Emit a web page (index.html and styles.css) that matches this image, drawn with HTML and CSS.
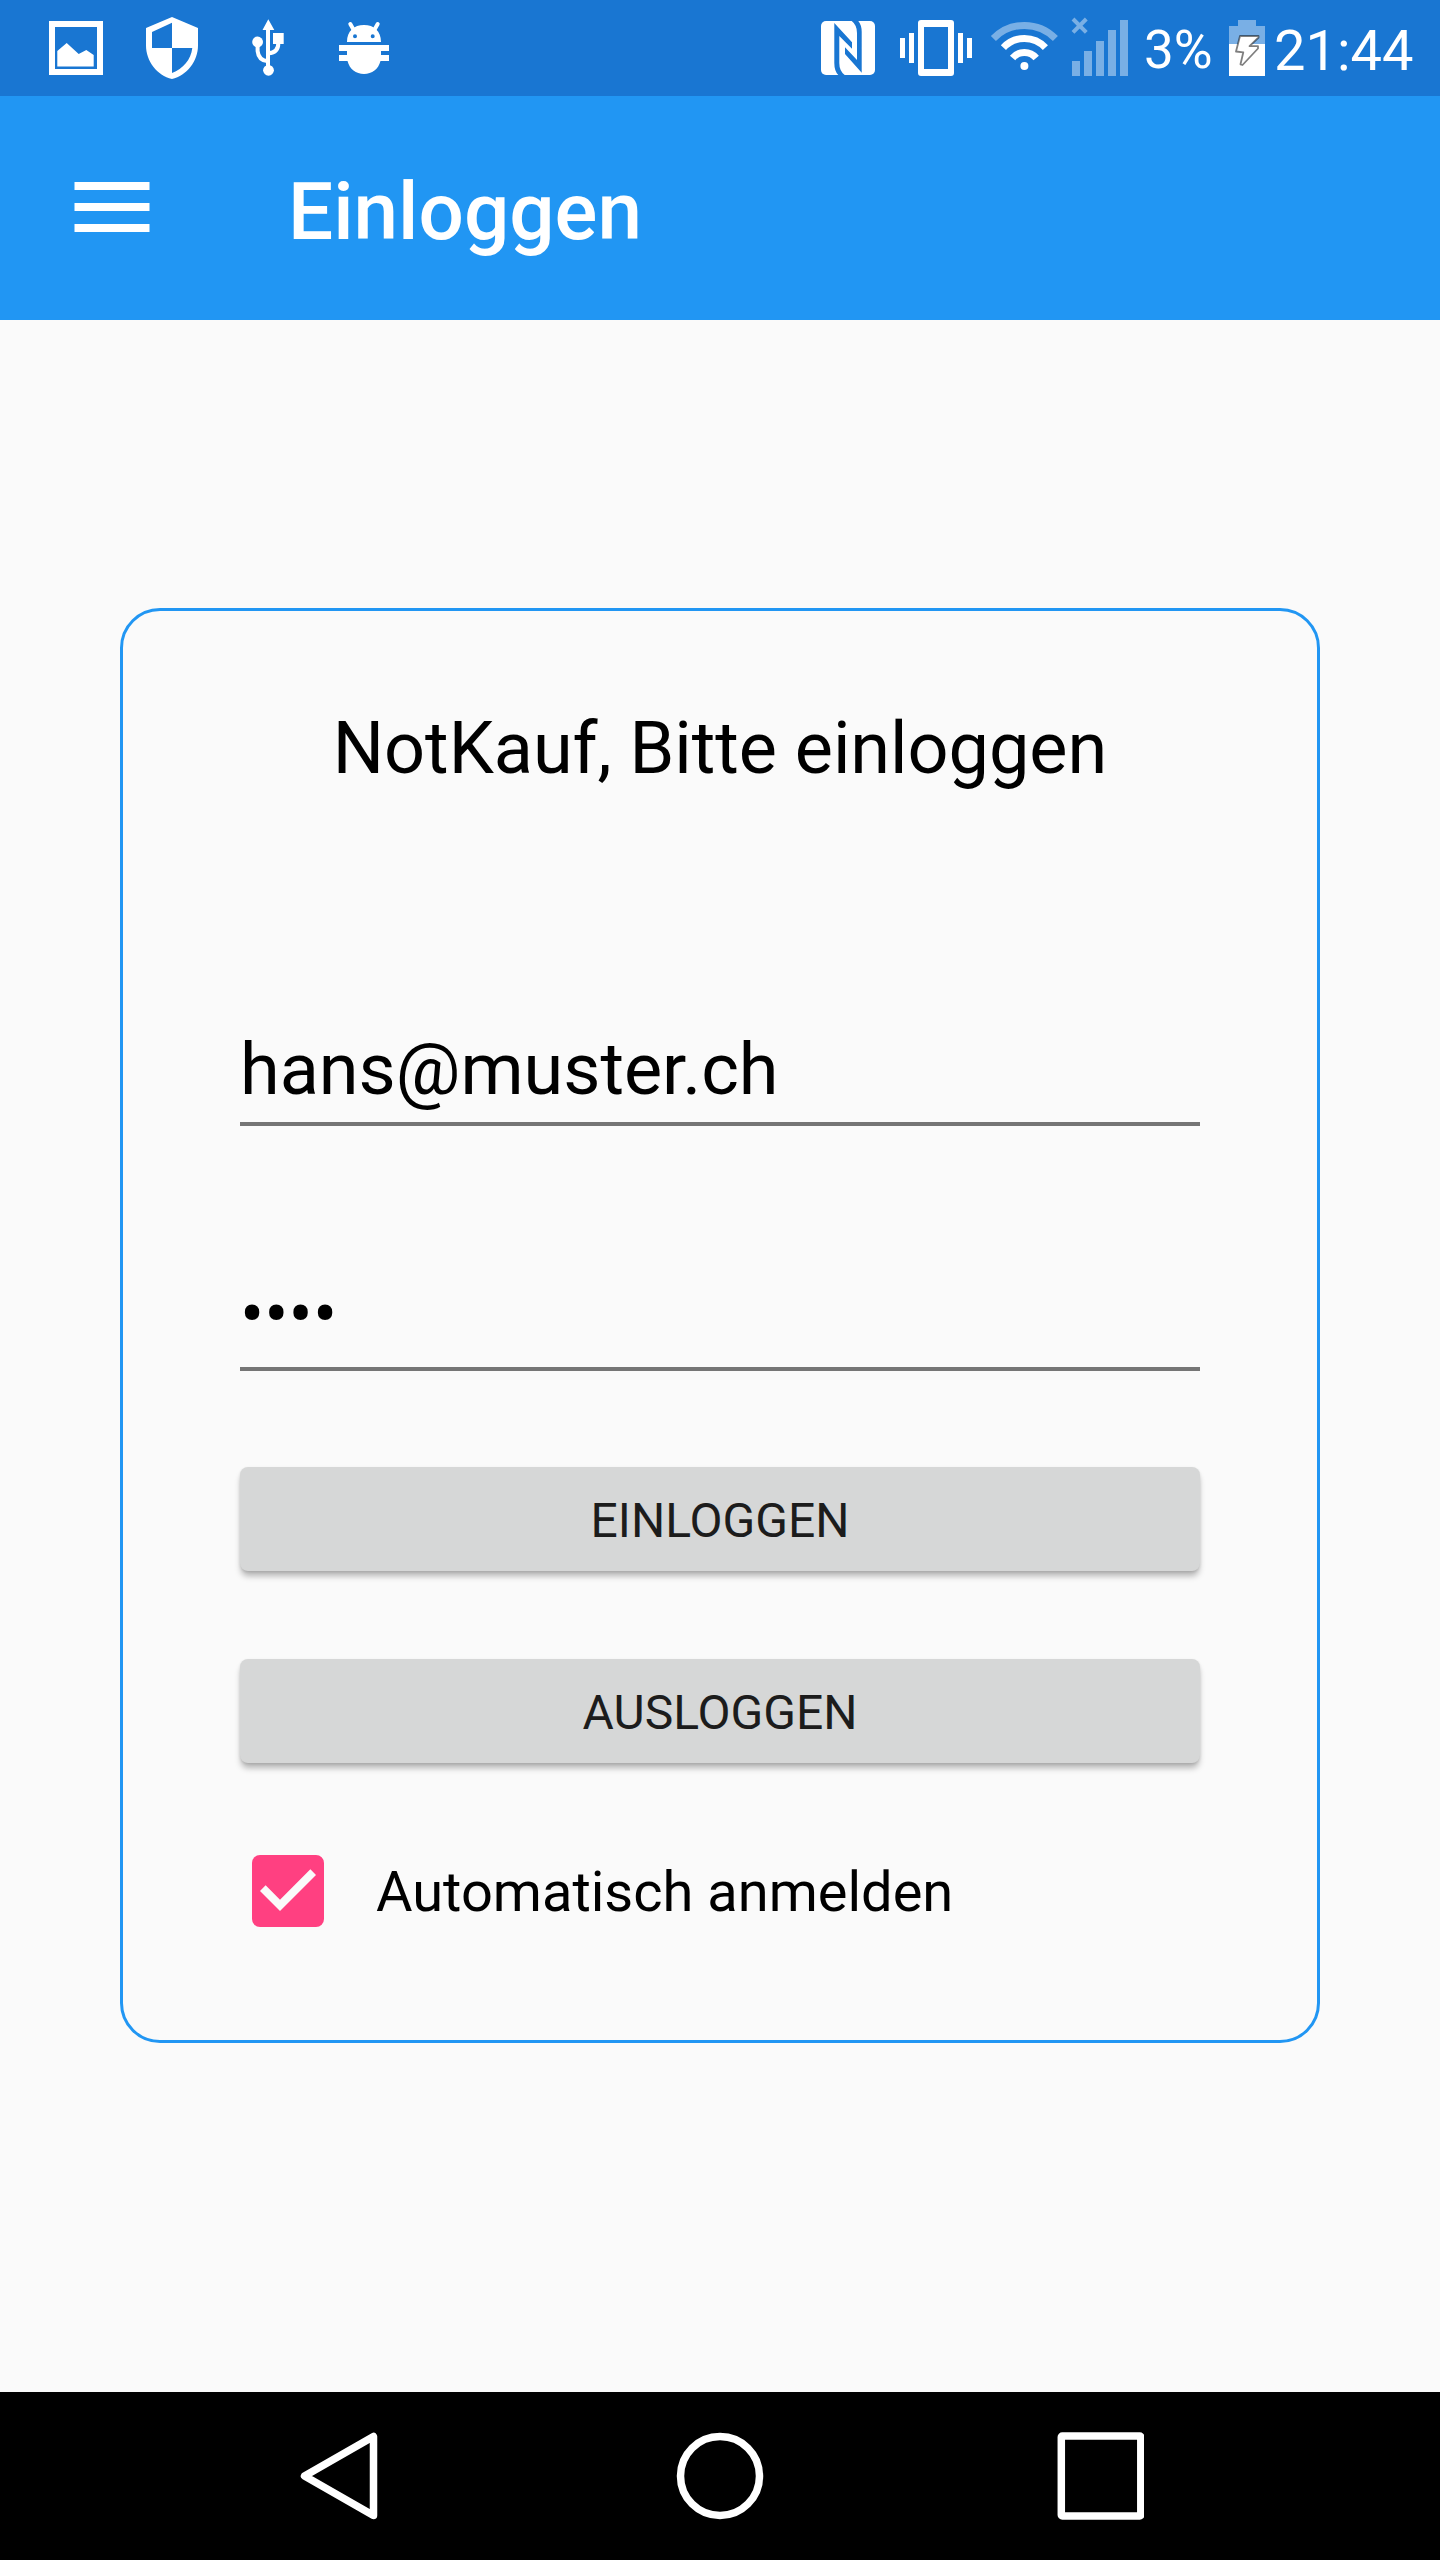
FILE: index.html
```html
<!DOCTYPE html>
<html lang="de">
<head>
<meta charset="utf-8">
<title>Einloggen</title>
<link rel="stylesheet" href="styles.css">
</head>
<body>
<div class="screen">
  <div class="status">
    <div class="notifications">
      <svg width="54" height="96" viewBox="49 0 54 96" fill="#fff"><path fill-rule="evenodd" d="M49 21H103V75H49ZM55 27V69H97V27Z"/><path d="M57.3 51L66.7 43L78.7 54L86.3 50L93.7 55V66.5H57.3Z"/></svg>
      <svg width="52" height="96" viewBox="146 0 52 96" fill="#fff"><path fill-rule="evenodd" d="M172 17L198 28V45.500C198 61 187 75.500 172 79C157 75.500 146 61 146 45.500V28ZM172 22.700L152 32V48H172ZM172 48V73C183 69 191 59.500 192.300 48Z"/></svg>
      <svg width="32" height="96" viewBox="252 0 32 96" fill="#fff"><path d="M268.300 19.300L274.300 30H270V70H266V30H262.500Z"/><circle cx="268.500" cy="70.300" r="5.400"/><circle cx="257.600" cy="42" r="5.400"/><path d="M273 33H283.700V44H273Z"/><path fill="none" stroke="#fff" stroke-width="4" d="M257.600 42V51Q258.500 60.500 268 61.300M278.300 43Q278.500 52.500 268.500 53.300"/></svg>
      <svg width="50" height="96" viewBox="339 0 50 96" fill="#fff"><path fill-rule="evenodd" d="M347 42C347 31 354 25 364 25S381 31 381 42ZM353 36.300a2 2 0 1 0 4 0a2 2 0 1 0-4 0ZM370.700 36.300a2 2 0 1 0 4 0a2 2 0 1 0-4 0Z"/><path d="M339 45H389V51H381V55H389V61H380.500C378.500 69 372 74 364 74S349.500 69 347.500 61H339V55H347V51H339Z"/><path stroke="#fff" stroke-width="4" stroke-linecap="round" d="M350.300 24L354 30.500M377.700 24L374 30.500"/></svg>
    </div>
    <div class="system">
      <svg width="307" height="96" viewBox="821 0 307 96" fill="#fff">
        <rect x="821" y="21" width="54" height="54" rx="5"/>
        <path fill="#1976d2" d="M834.300 23L852 42.300V48.700L839.300 36V63Q839.300 71 844.700 75H838.300Q834.300 71 834.300 63ZM861.700 72.700L845 54V47.300L857 60V33Q857 25 851.700 21H858.300Q861.700 25 861.700 32Z"/>
        <path fill-rule="evenodd" d="M921 20H951Q954 20 954 23V73Q954 76 951 76H921Q918 76 918 73V23Q918 20 921 20ZM924 27V69H948V27Z"/>
        <path d="M900 38h5v20h-5ZM909 33h5v30h-5ZM958 33h5v30h-5ZM967 38h5v20h-5Z"/>
        <circle cx="1024.400" cy="66" r="4"/>
        <g fill="none" stroke="#fff" stroke-width="7">
          <path d="M1012.600 58A15.400 15.400 0 0 1 1036.200 58"/>
          <path d="M1003.400 47.700A28.600 28.600 0 0 1 1045.400 47.700"/>
          <path stroke-opacity=".42" d="M993.400 38.500A43.200 43.200 0 0 1 1055.400 38.500"/>
          <path stroke-opacity=".42" stroke-width="4" d="M1073 19L1086.300 32.300M1086.300 19L1073 32.300"/>
        </g>
        <path fill-opacity=".42" d="M1072 61h8v15h-8ZM1084 51h8v25h-8ZM1096 41h8v35h-8ZM1108 30h8v46h-8ZM1120 20h8v56h-8Z"/>
      </svg>
      <span class="percent">3%</span>
      <svg width="36" height="96" viewBox="1229 0 36 96" fill="#fff"><path fill-opacity=".42" d="M1238 20H1256V26H1265V44H1229V26H1238Z"/><path d="M1229 44H1265V76H1229Z"/><path stroke="#000" stroke-opacity=".5" stroke-width="1.800" stroke-linejoin="round" d="M1240 36H1258.500V37.500L1249.500 46.200H1258V48.500L1242.500 65L1240.500 64.300L1243.300 52.300L1236 51.500Z"/></svg>
      <span class="clock">21:44</span>
    </div>
  </div>
  <header class="toolbar">
    <svg width="76" height="50" viewBox="0 0 76 50" fill="#fff"><path d="M.5 0H75.500V8H.5ZM.5 21H75.500V29H.5ZM.5 42H75.500V50H.5Z"/></svg>
    <h1 class="title">Einloggen</h1>
  </header>
  <main class="content">
    <form class="card">
      <h2 class="heading">NotKauf, Bitte einloggen</h2>
      <div class="field">hans@muster.ch</div>
      <div class="field password">••••</div>
      <button class="button" type="button">EINLOGGEN</button>
      <button class="button second" type="button">AUSLOGGEN</button>
      <label class="remember">
        <svg width="72" height="72" viewBox="3 3 18 18"><rect x="3" y="3" width="18" height="18" rx="2" fill="#ff4081"/><path fill="#fafafa" d="M10 17l-5-5 1.410-1.410L10 14.170l7.590-7.590L19 8z"/></svg>
        <span>Automatisch anmelden</span>
      </label>
    </form>
  </main>
  <nav class="navbar">
    <svg width="88" height="88" viewBox="0 0 88 88"><path d="M8.500 44L77.500 4.500V83.500Z"/></svg>
    <svg width="88" height="88" viewBox="0 0 88 88"><circle cx="44" cy="44" r="39.500"/></svg>
    <svg width="88" height="88" viewBox="0 0 88 88"><rect x="5.300" y="4" width="79.500" height="80" rx="1"/></svg>
  </nav>
</div>
</body>
</html>
```
FILE: styles.css
```css
* { box-sizing: border-box; }
body { margin: 0; font-family: Roboto, sans-serif; color: #000; background: #fafafa; }
svg { display: block; flex: none; }
.screen { width: 1440px; height: 2560px; display: flex; flex-direction: column; }

.status { height: 96px; background: #1976d2; color: #fff; display: flex; justify-content: space-between; padding-left: 49px; }
.notifications { display: flex; }
.notifications svg:nth-child(2) { margin-left: 43px; }
.notifications svg:nth-child(3) { margin-left: 54px; }
.notifications svg:nth-child(4) { margin-left: 55px; }
.system { display: flex; width: 619px; white-space: nowrap; }
.percent { flex: none; width: 101px; padding-left: 16px; font-size: 53px; line-height: 100px; }
.clock { padding-left: 9px; font-size: 56px; line-height: 102px; }

.toolbar { height: 224px; background: #2196f3; color: #fff; display: flex; align-items: flex-start; padding: 86px 74px; }
.title { margin: -22px 0 0 138px; font-size: 80px; font-weight: 500; line-height: 104px; }

.content { flex: 1; padding: 288px 120px 0; }
.card { height: 1435px; border: 3px solid #2196f3; border-radius: 40px; padding: 95px 117px 0; display: flex; flex-direction: column; }
.heading { margin: 0; font-size: 72px; font-weight: 400; line-height: 86px; height: 84px; text-align: center; letter-spacing: -.04px; }
.field { margin-top: 237px; height: 99px; border-bottom: 4px solid #757575; font-size: 72px; line-height: 86px; }
.password { margin-top: 146px; }
.button { margin: 96px 0 0; height: 104px; border: 0; border-radius: 8px; padding: 3px 0 0; background: #d6d7d7; color: #1c1c1c; font: 400 48px/101px Roboto, sans-serif; box-shadow: 0 6px 6px -1px rgba(0,0,0,.28), 0 1px 3px rgba(0,0,0,.1); }
.second { margin-top: 88px; }
.remember { margin: 92px 0 0 12px; display: flex; font-size: 56px; line-height: 74px; }
.remember span { margin-left: 52px; }

.navbar { height: 168px; background: #000; display: flex; justify-content: space-between; padding: 40px 296px; }
.navbar svg { fill: none; stroke: #fff; stroke-width: 7.5; stroke-linejoin: round; }
```
